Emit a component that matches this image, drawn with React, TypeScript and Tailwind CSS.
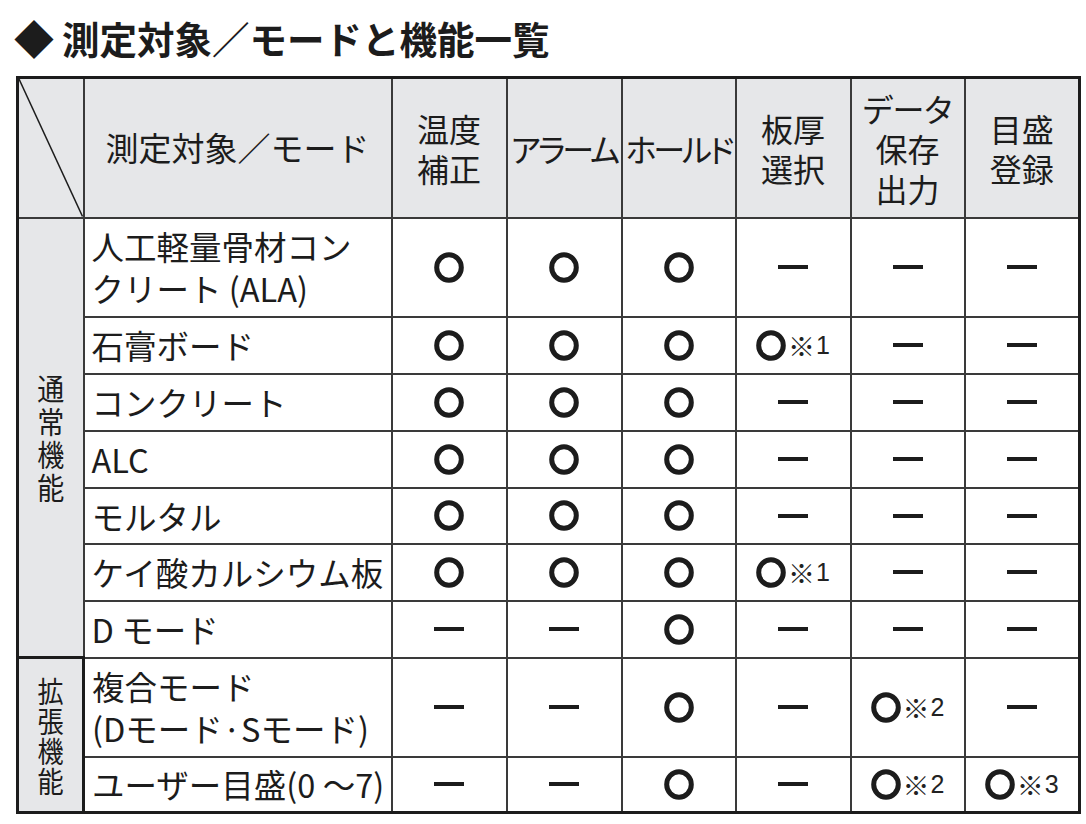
type Mark = 'o' | '-' | 'o1' | 'o2' | 'o3'

interface Row {
  name: string[]
  marks: Mark[]
  h: string
}

const normalRows: Row[] = [
  { name: ['人工軽量骨材コン', 'クリート (ALA)'], marks: ['o', 'o', 'o', '-', '-', '-'], h: 'h-[99px]' },
  { name: ['石膏ボード'], marks: ['o', 'o', 'o', 'o1', '-', '-'], h: 'h-[57px]' },
  { name: ['コンクリート'], marks: ['o', 'o', 'o', '-', '-', '-'], h: 'h-[57px]' },
  { name: ['ALC'], marks: ['o', 'o', 'o', '-', '-', '-'], h: 'h-[57px]' },
  { name: ['モルタル'], marks: ['o', 'o', 'o', '-', '-', '-'], h: 'h-[56px]' },
  { name: ['ケイ酸カルシウム板'], marks: ['o', 'o', 'o', 'o1', '-', '-'], h: 'h-[57px]' },
  { name: ['D モード'], marks: ['-', '-', 'o', '-', '-', '-'], h: 'h-[57px]' },
]

const extRows: Row[] = [
  { name: ['複合モード', '(Dモード·Sモード)'], marks: ['-', '-', 'o', '-', 'o2', '-'], h: 'h-[99px]' },
  { name: ['ユーザー目盛(0 ～7)'], marks: ['-', '-', 'o', '-', 'o2', 'o3'], h: 'h-[56px]' },
]

const headers = [['温度', '補正'], ['アラーム'], ['ホールド'], ['板厚', '選択'], ['データ', '保存', '出力'], ['目盛', '登録']]

const Ring = () => (
  <svg width="30" height="31" viewBox="0 0 30 31" className="shrink-0">
    <ellipse cx="15" cy="15.5" rx="12.3" ry="12.8" fill="none" stroke="#1c1c1c" strokeWidth="5" />
  </svg>
)

const MarkCell = ({ m }: { m: Mark }) => {
  if (m === '-') {
    return <div className="mx-auto h-[4px] w-[30px] bg-[#1c1c1c]" />
  }
  const note = m === 'o1' ? '1' : m === 'o2' ? '2' : m === 'o3' ? '3' : ''
  return (
    <div className="flex items-center justify-center">
      <Ring />
      {note && (
        <span className="ml-[2px] flex items-center leading-none text-[#222]">
          <span className="text-[27px] font-['Noto_Sans_CJK_JP',sans-serif]">※</span>
          <span className="ml-[1px] text-[25px] font-['Liberation_Sans',sans-serif]">{note}</span>
        </span>
      )}
    </div>
  )
}

const GroupLabel = ({ chars, size }: { chars: string[]; size: string }) => (
  <div className={`flex scale-x-90 flex-col items-center ${size}`}>
    {chars.map((c) => (
      <span key={c}>{c}</span>
    ))}
  </div>
)

const BodyRow = ({ row, group }: { row: Row; group?: React.ReactNode }) => (
  <tr className={row.h}>
    {group}
    <td className="whitespace-nowrap border-2 border-[#3a3a3a] pl-[7px] text-left text-[32.5px] leading-[42px]">
      {row.name.map((line) => (
        <div key={line}>{line}</div>
      ))}
    </td>
    {row.marks.map((m, i) => (
      <td key={i} className="border-2 border-[#3a3a3a] text-center">
        <MarkCell m={m} />
      </td>
    ))}
  </tr>
)

export default function App() {
  return (
    <div className="h-[824px] w-[1086px] bg-white text-[#1c1c1c] font-['Noto_Sans_CJK_JP',sans-serif]">
      <h1 className="flex items-center pl-[14px] pt-[16px] text-[37.5px] font-bold leading-[44px]">
        <span className="mr-[8px] text-[40px]">◆</span>
        <span>測定対象／モードと機能一覧</span>
      </h1>

      <table className="ml-[16px] mt-[16px] w-[1062px] table-fixed border-collapse border-[3px] border-[#1c1c1c]">
        <colgroup>
          <col className="w-[66px]" />
          <col className="w-[308px]" />
          <col className="w-[115px]" />
          <col className="w-[115px]" />
          <col className="w-[114px]" />
          <col className="w-[115px]" />
          <col className="w-[114px]" />
          <col className="w-[115px]" />
        </colgroup>
        <thead>
          <tr className="h-[140px] bg-[#e6e7e9]">
            <th className="relative border-2 border-[#3a3a3a] p-0">
              <svg className="absolute inset-0 h-full w-full" preserveAspectRatio="none" viewBox="0 0 100 100">
                <line x1="0" y1="0" x2="100" y2="100" stroke="#1c1c1c" strokeWidth="1.5" vectorEffect="non-scaling-stroke" />
              </svg>
            </th>
            <th className="border-2 border-[#3a3a3a] text-[33px] font-normal">測定対象／モード</th>
            {headers.map((lines) => (
              <th
                key={lines.join('')}
                className="border-2 border-[#3a3a3a] p-0 text-[32px] font-normal leading-[40px] [font-feature-settings:'palt']"
              >
                {lines.map((l) => (
                  <div key={l} className={l.length === 4 ? 'whitespace-nowrap tracking-[-3px]' : 'whitespace-nowrap'}>
                    {l}
                  </div>
                ))}
              </th>
            ))}
          </tr>
        </thead>
        <tbody>
          {normalRows.map((row, i) => (
            <BodyRow
              key={row.name.join('')}
              row={row}
              group={
                i === 0 ? (
                  <td rowSpan={normalRows.length} className="border-2 border-[#3a3a3a] bg-[#e6e7e9] align-middle">
                    <GroupLabel chars={['通', '常', '機', '能']} size="text-[30px] leading-[33px]" />
                  </td>
                ) : undefined
              }
            />
          ))}
          {extRows.map((row, i) => (
            <BodyRow
              key={row.name.join('')}
              row={row}
              group={
                i === 0 ? (
                  <td rowSpan={extRows.length} className="border-[3px] border-[#1c1c1c] bg-[#e6e7e9] align-middle">
                    <GroupLabel chars={['拡', '張', '機', '能']} size="text-[29px] leading-[30px]" />
                  </td>
                ) : undefined
              }
            />
          ))}
        </tbody>
      </table>
    </div>
  )
}
